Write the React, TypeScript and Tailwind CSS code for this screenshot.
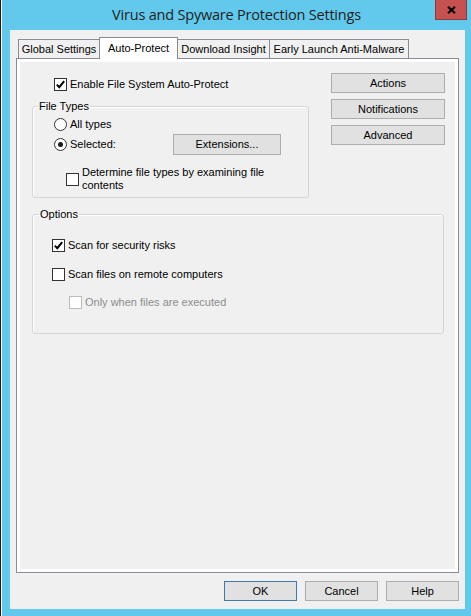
import React from "react";

function CheckBox({ checked = false, disabled = false }: { checked?: boolean; disabled?: boolean }) {
    return (
        <span
            className={`w-[13px] h-[13px] shrink-0 border bg-white flex items-center justify-center ${
                disabled ? "border-[#bcbcbc]" : "border-[#333333]"
            }`}
        >
            {checked && (
                <svg width="11" height="11" viewBox="0 0 11 11">
                    <path d="M1.8 5.6 L4.3 8.2 L9.2 2.2" fill="none" stroke="#000" strokeWidth="2" />
                </svg>
            )}
        </span>
    );
}

function Radio({ checked = false }: { checked?: boolean }) {
    return (
        <span className="w-[13px] h-[13px] shrink-0 rounded-full border border-[#333333] bg-white flex items-center justify-center">
            {checked && <span className="w-[5px] h-[5px] rounded-full bg-[#1a1a1a]" />}
        </span>
    );
}

function Button({ label, width, isDefault = false }: { label: string; width: string; isDefault?: boolean }) {
    return (
        <button
            className={`${width} h-[20px] bg-[#e1e1e1] border flex items-center justify-center leading-none ${
                isDefault ? "border-[#3d7bad]" : "border-[#adadad]"
            }`}
        >
            {label}
        </button>
    );
}

export default function App() {
    return (
        <div className="w-[471px] h-[616px] bg-[#62c9ec] flex overflow-hidden font-['Liberation_Sans',Arial,sans-serif] text-[11px] leading-[13px] text-black">
            {/* edge of the window behind */}
            <div className="w-px bg-[#1e1e1e]" />
            <div className="w-px bg-white" />

            <div className="w-[469px] flex flex-col">
                {/* Title bar */}
                <div className="relative h-[30px] flex items-center justify-center">
                    <span className="text-[14.5px] leading-none text-[#1e1e1e] font-['Open_Sans',sans-serif] tracking-[-0.2px] pt-px">
                        Virus and Spyware Protection Settings
                    </span>
                    <div className="absolute top-0 right-[4px] w-[32px] h-[20px] bg-[#c75050] border border-t-0 border-[#8f3a3a] flex items-center justify-center">
                        <svg width="9" height="8" viewBox="0 0 9 8">
                            <path d="M1 0.8 L8 7.2 M8 0.8 L1 7.2" stroke="#000" strokeWidth="2.2" />
                        </svg>
                    </div>
                </div>

                {/* Client area */}
                <div className="ml-[8px] w-[455px] h-[579px] bg-[#f0f0f0] flex flex-col">
                    {/* Tabs */}
                    <div className="mt-[7px] h-[21px] pl-[8px] flex items-end">
                        <div className="w-[81px] h-[19px] border-l border-t border-[#898c95] flex items-center justify-center">
                            Global Settings
                        </div>
                        <div className="relative z-10 -mb-px w-[79px] h-[22px] bg-white border-l border-t border-r border-[#898c95] flex items-center justify-center">
                            Auto-Protect
                        </div>
                        <div className="w-[92px] h-[19px] border-t border-r border-[#898c95] flex items-center justify-center">
                            Download Insight
                        </div>
                        <div className="w-[139px] h-[19px] border-t border-r border-[#898c95] flex items-center justify-center">
                            Early Launch Anti-Malware
                        </div>
                    </div>

                    {/* Tab page */}
                    <div className="ml-[6px] w-[443px] h-[515px] border border-[#898c95]">
                        <div className="h-full border-[3px] border-white flex flex-col">
                            <div className="flex">
                                <div className="ml-[12px] w-[277px] flex flex-col">
                                    <label className="mt-[16px] pl-[22px] flex items-center gap-[3px]">
                                        <CheckBox checked />
                                        <span>Enable File System Auto-Protect</span>
                                    </label>

                                    <fieldset className="mt-[9px] h-[98px] border border-[#d5d5d5] rounded-[3px] shadow-[inset_1px_1px_0_#ffffff]">
                                        <legend className="ml-[5px] px-px leading-[13px]">File Types</legend>
                                        <div className="pl-[21px] mt-[5px] flex flex-col">
                                            <label className="flex items-center gap-[3px]">
                                                <Radio />
                                                <span>All types</span>
                                            </label>
                                            <div className="mt-[3px] flex items-center">
                                                <label className="w-[119px] flex items-center gap-[3px]">
                                                    <Radio checked />
                                                    <span>Selected:</span>
                                                </label>
                                                <button className="w-[108px] h-[21px] bg-[#e1e1e1] border border-[#adadad] flex items-center justify-center leading-none">
                                                    Extensions...
                                                </button>
                                            </div>
                                            <label className="mt-[11px] pl-[12px] flex items-center gap-[3px]">
                                                <CheckBox />
                                                <span>
                                                    Determine file types by examining file
                                                    <br />
                                                    contents
                                                </span>
                                            </label>
                                        </div>
                                    </fieldset>
                                </div>

                                <div className="ml-[22px] mt-[11px] flex flex-col gap-[6px]">
                                    <Button label="Actions" width="w-[114px]" />
                                    <Button label="Notifications" width="w-[114px]" />
                                    <Button label="Advanced" width="w-[114px]" />
                                </div>
                            </div>

                            <fieldset className="ml-[12px] mt-[10px] w-[412px] h-[126px] border border-[#d5d5d5] rounded-[3px] shadow-[inset_1px_1px_0_#ffffff]">
                                <legend className="ml-[6px] px-px leading-[13px]">Options</legend>
                                <div className="pl-[19px] mt-[18px] flex flex-col">
                                    <label className="flex items-center gap-[3px]">
                                        <CheckBox checked />
                                        <span>Scan for security risks</span>
                                    </label>
                                    <label className="mt-[16px] flex items-center gap-[3px]">
                                        <CheckBox />
                                        <span>Scan files on remote computers</span>
                                    </label>
                                    <label className="mt-[15px] pl-[17px] flex items-center gap-[3px] text-[#8d8d8d]">
                                        <CheckBox disabled />
                                        <span>Only when files are executed</span>
                                    </label>
                                </div>
                            </fieldset>
                        </div>
                    </div>

                    {/* Dialog buttons */}
                    <div className="mt-[8px] pr-[6px] flex justify-end gap-[8px]">
                        <Button label="OK" width="w-[73px]" isDefault />
                        <Button label="Cancel" width="w-[73px]" />
                        <Button label="Help" width="w-[73px]" />
                    </div>
                </div>
            </div>
        </div>
    );
}
